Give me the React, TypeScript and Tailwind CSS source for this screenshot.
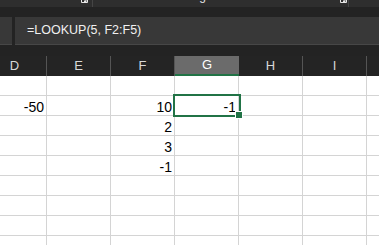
const COLS = ["D", "E", "F", "G", "H", "I", "J"];

const CELLS: Record<string, string> = {
  "1-D": "-50",
  "1-F": "10",
  "1-G": "-1",
  "2-F": "2",
  "3-F": "3",
  "4-F": "-1",
};

function Launcher() {
  return (
    <svg width="8" height="7" viewBox="0 0 8 7" className="shrink-0">
      <path d="M0.5 -3 V2.5 H6.5 V-3" fill="none" stroke="#e6e6e6" strokeWidth="1" />
      <path d="M2.5 -1 L5 1.5 M5 -0.5 V1.5 H3" fill="none" stroke="#e6e6e6" strokeWidth="1" />
    </svg>
  );
}

export default function App() {
  return (
    <div
      className="relative h-[245px] w-[379px] overflow-hidden bg-white"
      style={{ fontFamily: '"Liberation Sans", Arial, sans-serif' }}
    >
      {/* ribbon bottom edge */}
      <div className="flex h-[7px] overflow-hidden bg-[#2e2e2e]">
        <div className="ml-[81px]">
          <Launcher />
        </div>
        <div className="ml-[3px] h-full w-px bg-[#454545]" />
        <div className="h-[3px] w-[247px] shrink-0 overflow-hidden pl-[93px]">
          <div className="mt-[-10px] text-[12px] leading-[12px] text-[#e6e6e6]">Alignment</div>
        </div>
        <Launcher />
        <div className="h-full w-px bg-[#454545]" />
      </div>

      {/* formula bar */}
      <div className="bg-[#232323] pt-[10px] pb-[11px]">
        <div className="flex h-[28px] gap-[3px]">
          <div className="w-[12px] bg-[#383838] border-b border-[#474747]" />
          <div className="flex flex-1 items-center border-b border-[#474747] bg-[#383838] pl-[12px] text-[12.5px] text-[#f0f0f0]">
            =LOOKUP(5, F2:F5)
          </div>
        </div>
      </div>

      {/* sheet */}
      <div className="ml-[-17px]">
        <div className="flex h-[20px] bg-[#242424]">
          {COLS.map((c) =>
            c === "G" ? (
              <div
                key={c}
                className="flex w-[64px] shrink-0 items-center justify-center border-b-2 border-[#217346] bg-[#6b6b6b] text-[13px] text-white"
              >
                {c}
              </div>
            ) : (
              <div
                key={c}
                className="flex w-[64px] shrink-0 items-center justify-center border-r border-[#555555] text-[13px] text-[#d8d8d8]"
              >
                {c === "J" ? "" : c}
              </div>
            )
          )}
        </div>
        {Array.from({ length: 9 }, (_, r) => (
          <div key={r} className="flex h-[20px]">
            {COLS.map((c) => (
              <div
                key={c}
                className="flex w-[64px] shrink-0 items-end justify-end border-r border-b border-[#d4d4d4] pr-[2px] pb-[1px] text-[14px] leading-[14px] text-black"
              >
                {CELLS[`${r}-${c}`] ?? ""}
              </div>
            ))}
          </div>
        ))}
      </div>

      {/* active cell G2 */}
      <div className="absolute left-[173px] top-[94px] h-[23px] w-[68px] border-2 border-[#217346]" />
      <div className="absolute left-[236px] top-[112px] h-[6px] w-[6px] bg-[#217346] outline outline-1 outline-white" />
    </div>
  );
}
